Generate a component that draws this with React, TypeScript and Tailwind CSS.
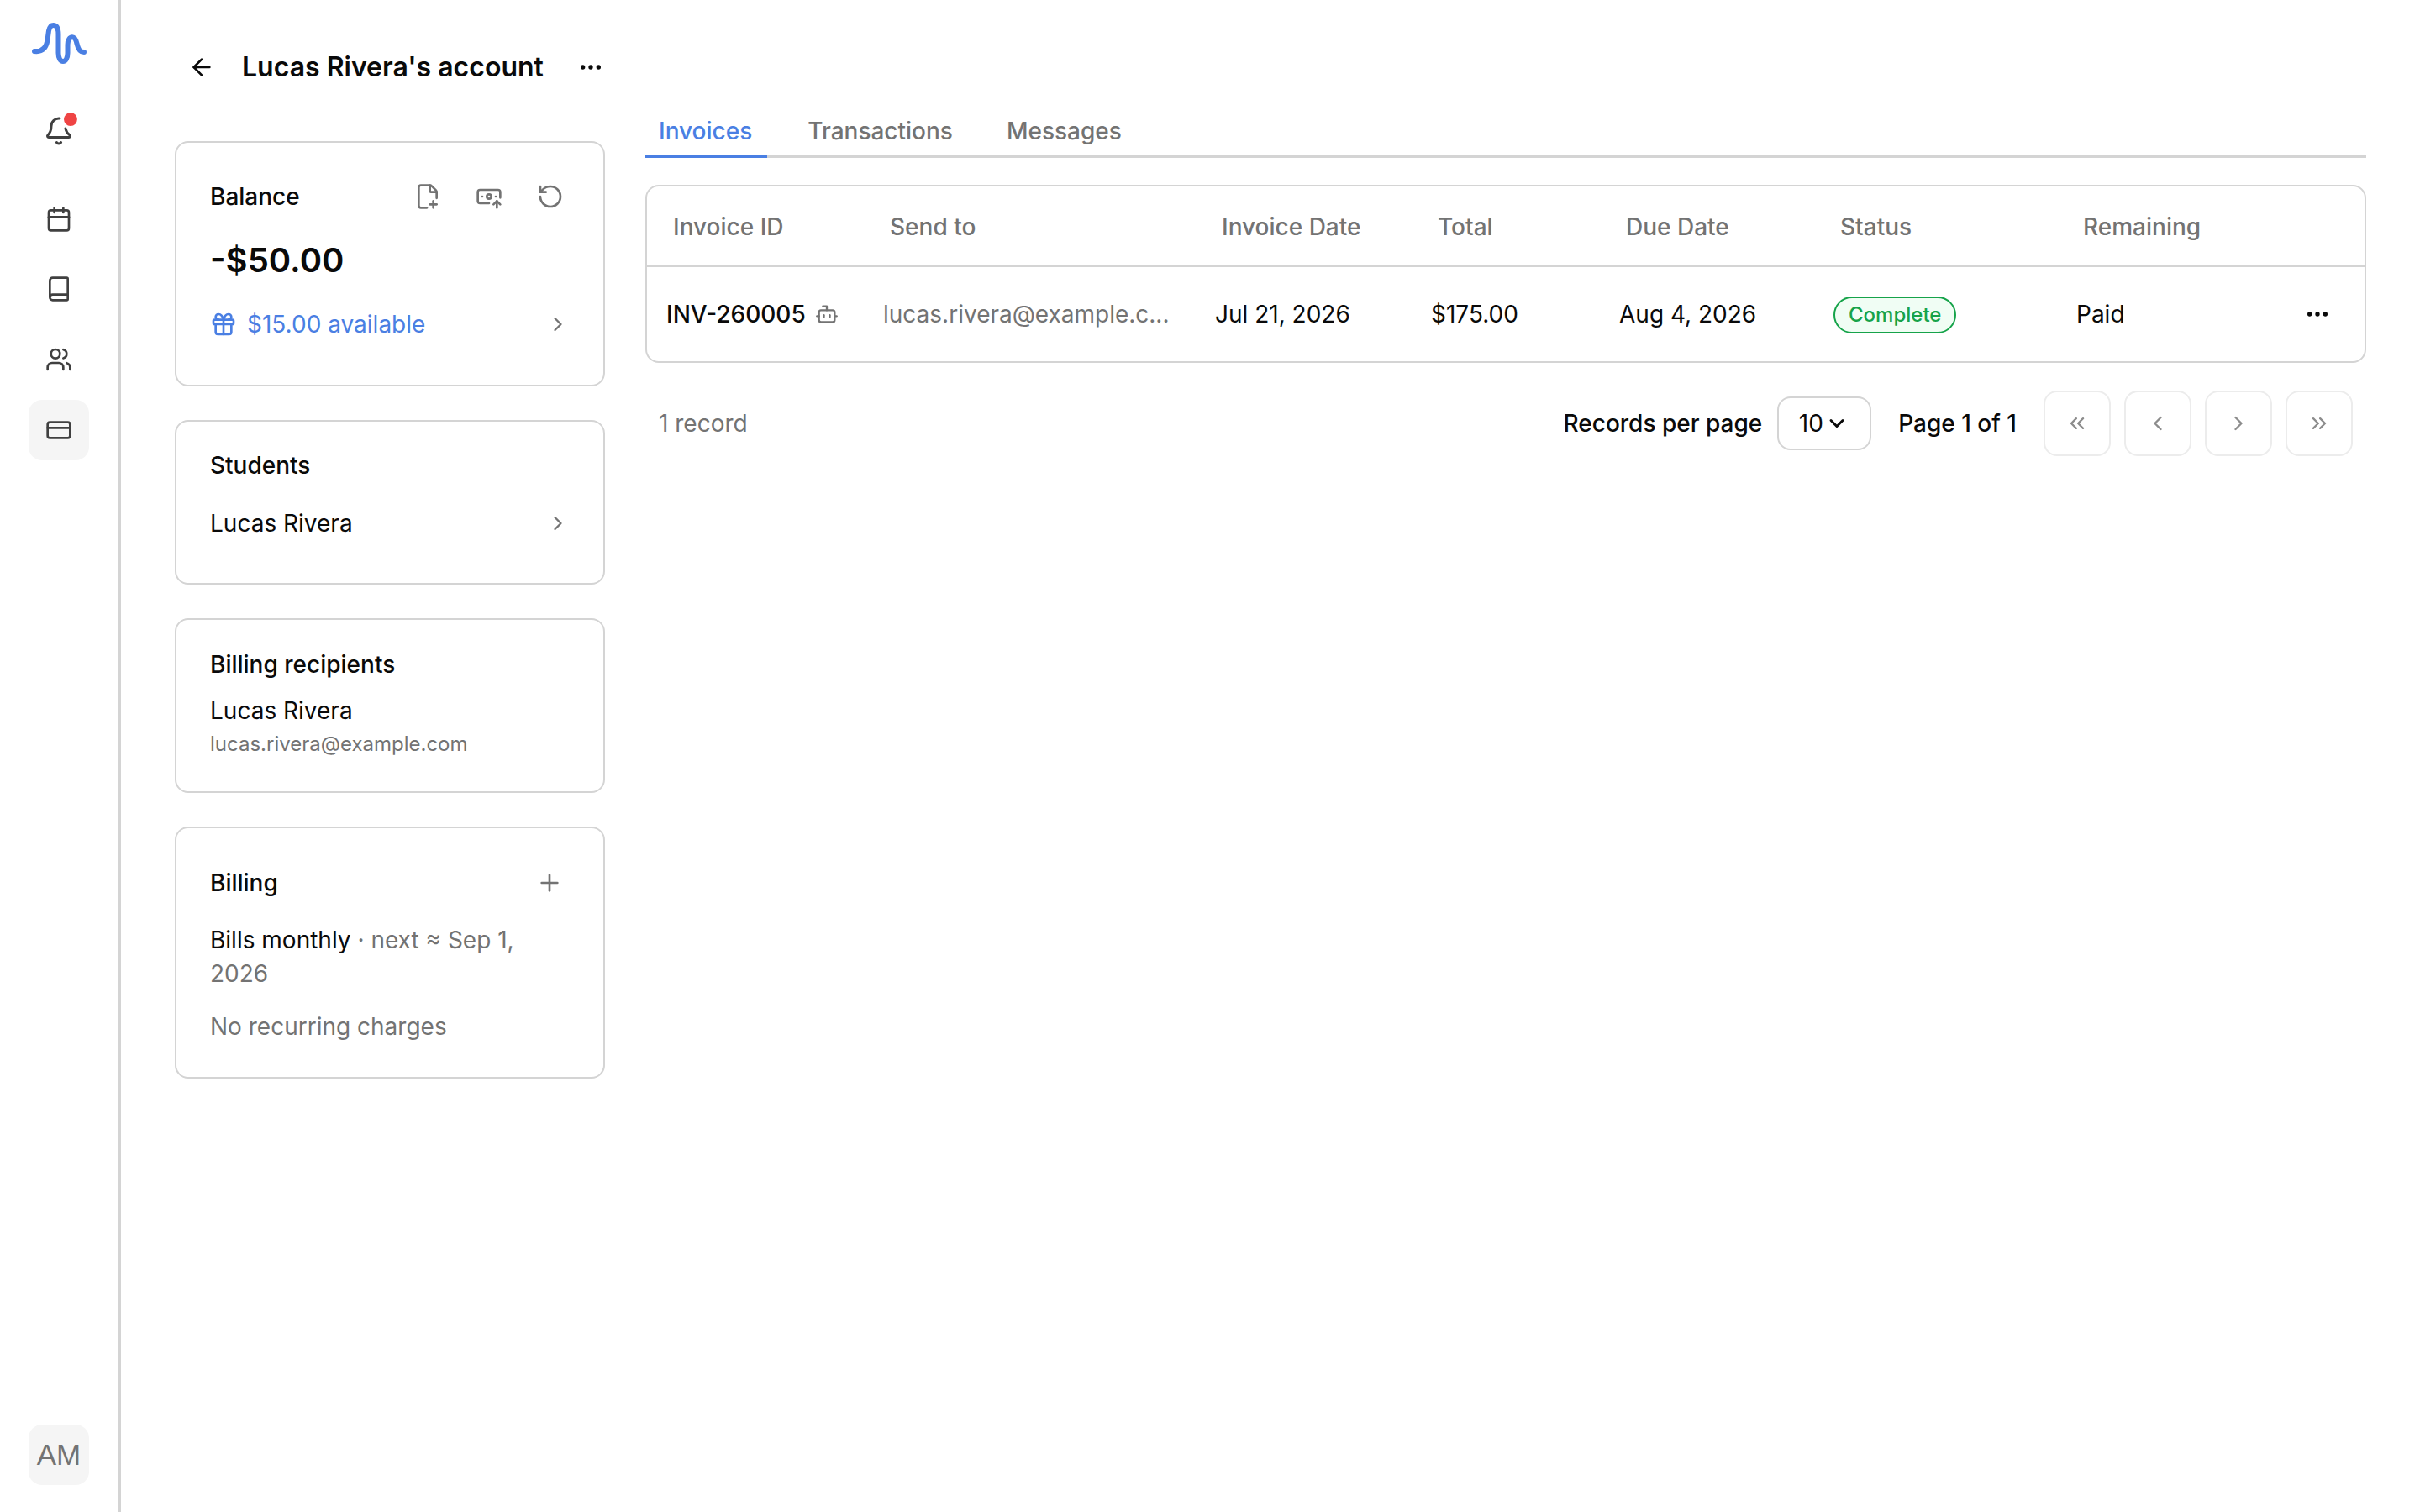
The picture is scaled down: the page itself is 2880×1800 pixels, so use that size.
import {
  ArrowLeft,
  BanknoteArrowUp,
  Book,
  Bot,
  Calendar,
  ChevronDown,
  ChevronLeft,
  ChevronRight,
  ChevronsLeft,
  ChevronsRight,
  CreditCard,
  Ellipsis,
  FilePlusCorner,
  Gift,
  Plus,
  RotateCcw,
  Users,
} from "lucide-react";

const columns = "grid grid-cols-[258px_395px_257px_224px_255px_289px_1fr]";

function Logo() {
  return (
    <svg viewBox="36 24 68 56" className="h-[56px] w-[68px]" fill="none" stroke="#4a7fe3" strokeWidth="6" strokeLinecap="round">
      <path d="M41 61 C50 62 55 57.6 56.5 47.6 L58 36.6 C59 32.2 61 30 63.5 30 C68 30 69.5 34.4 69.5 41 L69.5 63 C69.5 69.7 72 73 75 73 C78 73 80.5 69.7 80.5 63 L80.5 53.2 C80.5 47.6 83 44.3 86 44.3 C89 44.3 90.5 47.6 91.5 52 C93 58.7 95 62 100 62" />
    </svg>
  );
}

function BellWithDot() {
  return (
    <svg viewBox="0 0 24 24" className="h-[36px] w-[36px] overflow-visible" fill="none" stroke="#404040" strokeWidth="2" strokeLinecap="round" strokeLinejoin="round">
      <path d="M10.268 21a2 2 0 0 0 3.464 0" />
      <path d="M12.6 2A6 6 0 0 0 6 8c0 4.499-1.411 5.956-2.74 7.327A1 1 0 0 0 4 17h16a1 1 0 0 0 .74-1.673C19.4 14.4 17.9 13 17.3 10" />
      <circle cx="21.3" cy="2.7" r="5.3" fill="#ef4444" stroke="none" />
    </svg>
  );
}

function Sidebar() {
  return (
    <aside className="flex h-full w-[144px] shrink-0 flex-col items-center border-r-4 border-[#d4d4d4]">
      <div className="mt-[24px] flex h-[56px] items-center">
        <Logo />
      </div>
      <div className="mt-[58px] flex h-[36px] items-center">
        <BellWithDot />
      </div>
      <div className="mt-[71px] flex h-[32px] items-center text-[#404040]">
        <Calendar size={32} />
      </div>
      <div className="mt-[51px] flex h-[32px] items-center text-[#404040]">
        <Book size={32} />
      </div>
      <div className="mt-[52px] flex h-[32px] items-center text-[#404040]">
        <Users size={32} />
      </div>
      <div className="mt-[32px] flex h-[72px] w-[72px] items-center justify-center rounded-[16px] bg-[#f5f5f5] text-[#404040]">
        <CreditCard size={32} />
      </div>
      <div className="mt-auto mb-[32px] flex h-[72px] w-[72px] items-center justify-center rounded-[16px] bg-[#f5f5f5] font-['Liberation_Sans',sans-serif] text-[35px] text-[#737373]">
        AM
      </div>
    </aside>
  );
}

function BalanceCard() {
  return (
    <section className="rounded-[16px] border-2 border-[#d4d4d4] px-[40px] pt-[34px] pb-[52px]">
      <div className="flex h-[60px] items-center justify-between text-[#737373]">
        <span className="text-[28px] font-medium text-[#0a0a0a]">Balance</span>
        <div className="mr-[7px] flex items-center gap-[41px]">
          <FilePlusCorner size={32} />
          <BanknoteArrowUp size={32} />
          <RotateCcw size={32} />
        </div>
      </div>
      <div className="mt-[18px] h-[56px] text-[40px] leading-[56px] font-semibold text-[#0a0a0a]">-$50.00</div>
      <div className="mt-[28px] flex h-[40px] items-center justify-between text-[#4a7fe3]">
        <div className="flex items-center gap-[12px]">
          <Gift size={32} />
          <span className="text-[28px]">$15.00 available</span>
        </div>
        <ChevronRight size={28} className="text-[#737373]" />
      </div>
    </section>
  );
}

function StudentsCard() {
  return (
    <section className="rounded-[16px] border-2 border-[#d4d4d4] px-[40px] pt-[32px] pb-[51px]">
      <div className="text-[28px] leading-[40px] font-medium">Students</div>
      <div className="mt-[29px] flex h-[40px] items-center justify-between">
        <span className="text-[28px]">Lucas Rivera</span>
        <ChevronRight size={28} className="text-[#737373]" />
      </div>
    </section>
  );
}

function RecipientsCard() {
  return (
    <section className="rounded-[16px] border-2 border-[#d4d4d4] px-[40px] pt-[33px] pb-[40px]">
      <div className="text-[28px] leading-[40px] font-medium">Billing recipients</div>
      <div className="mt-[15px] text-[28px] leading-[40px]">Lucas Rivera</div>
      <div className="mt-[4px] text-[24px] leading-[32px] text-[#737373]">lucas.rivera@example.com</div>
    </section>
  );
}

function BillingCard() {
  return (
    <section className="rounded-[16px] border-2 border-[#d4d4d4] px-[40px] pt-[35px] pb-[40px]">
      <div className="flex h-[60px] items-center justify-between">
        <span className="text-[28px] font-medium">Billing</span>
        <Plus size={32} className="mr-[8px] text-[#737373]" />
      </div>
      <p className="mt-[18px] text-[28px] leading-[40px] text-[#737373]">
        <span className="text-[#0a0a0a]">Bills monthly</span> · next ≈ Sep 1, 2026
      </p>
      <p className="mt-[23px] text-[28px] leading-[40px] text-[#737373]">No recurring charges</p>
    </section>
  );
}

function Tabs() {
  return (
    <div className="flex h-[64px] gap-[32px] border-b-4 border-[#d4d4d4]">
      <div className="mb-[-4px] flex h-[64px] items-center border-b-4 border-[#4a7fe3] pt-[3px] pr-[18px] pl-[16px] text-[28px] font-medium text-[#4a7fe3]">
        Invoices
      </div>
      <div className="flex items-center px-[16px] pt-[3px] text-[28px] font-medium text-[#737373]">Transactions</div>
      <div className="flex items-center px-[16px] pt-[3px] text-[28px] font-medium text-[#737373]">Messages</div>
    </div>
  );
}

function InvoiceTable() {
  const headers = ["Invoice ID", "Send to", "Invoice Date", "Total", "Due Date", "Status", "Remaining"];
  return (
    <div className="mt-[32px] rounded-[16px] border-2 border-[#d4d4d4]">
      <div className={`${columns} h-[96px] items-center border-b-2 border-[#d4d4d4] pt-[2px] pl-[23px] text-[28px] font-medium text-[#737373]`}>
        {headers.map((h) => (
          <div key={h} className="pl-[8px]">
            {h}
          </div>
        ))}
      </div>
      <div className={`${columns} h-[112px] items-center pl-[23px] text-[28px]`}>
        <div className="flex items-center gap-[11px] font-medium">
          INV-260005
          <Bot size={28} className="text-[#737373]" />
        </div>
        <div className="text-[#737373]">lucas.rivera@example.c...</div>
        <div>Jul 21, 2026</div>
        <div>$175.00</div>
        <div>Aug 4, 2026</div>
        <div>
          <span className="inline-flex h-[44px] items-center rounded-full border-2 border-[#16a34a] bg-[#f0fdf4] px-[16px] text-[24px] font-medium text-[#16a34a]">
            Complete
          </span>
        </div>
        <div className="flex items-center justify-between pr-[40px]">
          Paid
          <Ellipsis size={32} />
        </div>
      </div>
    </div>
  );
}

function Pager() {
  const pageButton = "flex h-[78px] w-[80px] items-center justify-center rounded-[16px] border-2 border-[#ececec] text-[#8c8c8c]";
  return (
    <div className="mt-[32px] flex h-[80px] items-center justify-between pr-[16px] pl-[16px]">
      <span className="text-[28px] text-[#737373]">1 record</span>
      <div className="flex items-center">
        <span className="text-[28px] font-medium">Records per page</span>
        <div className="ml-[18px] flex h-[64px] w-[112px] items-center justify-center gap-[2px] rounded-[16px] border-2 border-[#d4d4d4] pr-[2px] text-[28px]">
          10
          <ChevronDown size={28} strokeWidth={2.5} />
        </div>
        <span className="mr-[32px] ml-[32px] text-[28px] font-medium">Page 1 of 1</span>
        <div className="flex gap-[16px]">
          <div className={pageButton}>
            <ChevronsLeft size={28} />
          </div>
          <div className={pageButton}>
            <ChevronLeft size={28} />
          </div>
          <div className={pageButton}>
            <ChevronRight size={28} />
          </div>
          <div className={pageButton}>
            <ChevronsRight size={28} />
          </div>
        </div>
      </div>
    </div>
  );
}

export default function App() {
  return (
    <div className="flex h-[1800px] w-[2880px] bg-white font-[Inter,sans-serif] text-[#0a0a0a]">
      <Sidebar />
      <main className="flex-1 pt-[36px] pr-[64px] pl-[64px]">
        <header className="flex h-[88px] items-center pl-[16px]">
          <ArrowLeft size={32} />
          <h1 className="ml-[32px] text-[32px] font-semibold">Lucas Rivera's account</h1>
          <Ellipsis size={32} className="ml-[40px]" />
        </header>
        <div className="flex gap-[48px]">
          <div className="flex w-[512px] shrink-0 flex-col gap-[40px] pt-[44px]">
            <BalanceCard />
            <StudentsCard />
            <RecipientsCard />
            <BillingCard />
          </div>
          <div className="min-w-0 flex-1">
            <Tabs />
            <InvoiceTable />
            <Pager />
          </div>
        </div>
      </main>
    </div>
  );
}
